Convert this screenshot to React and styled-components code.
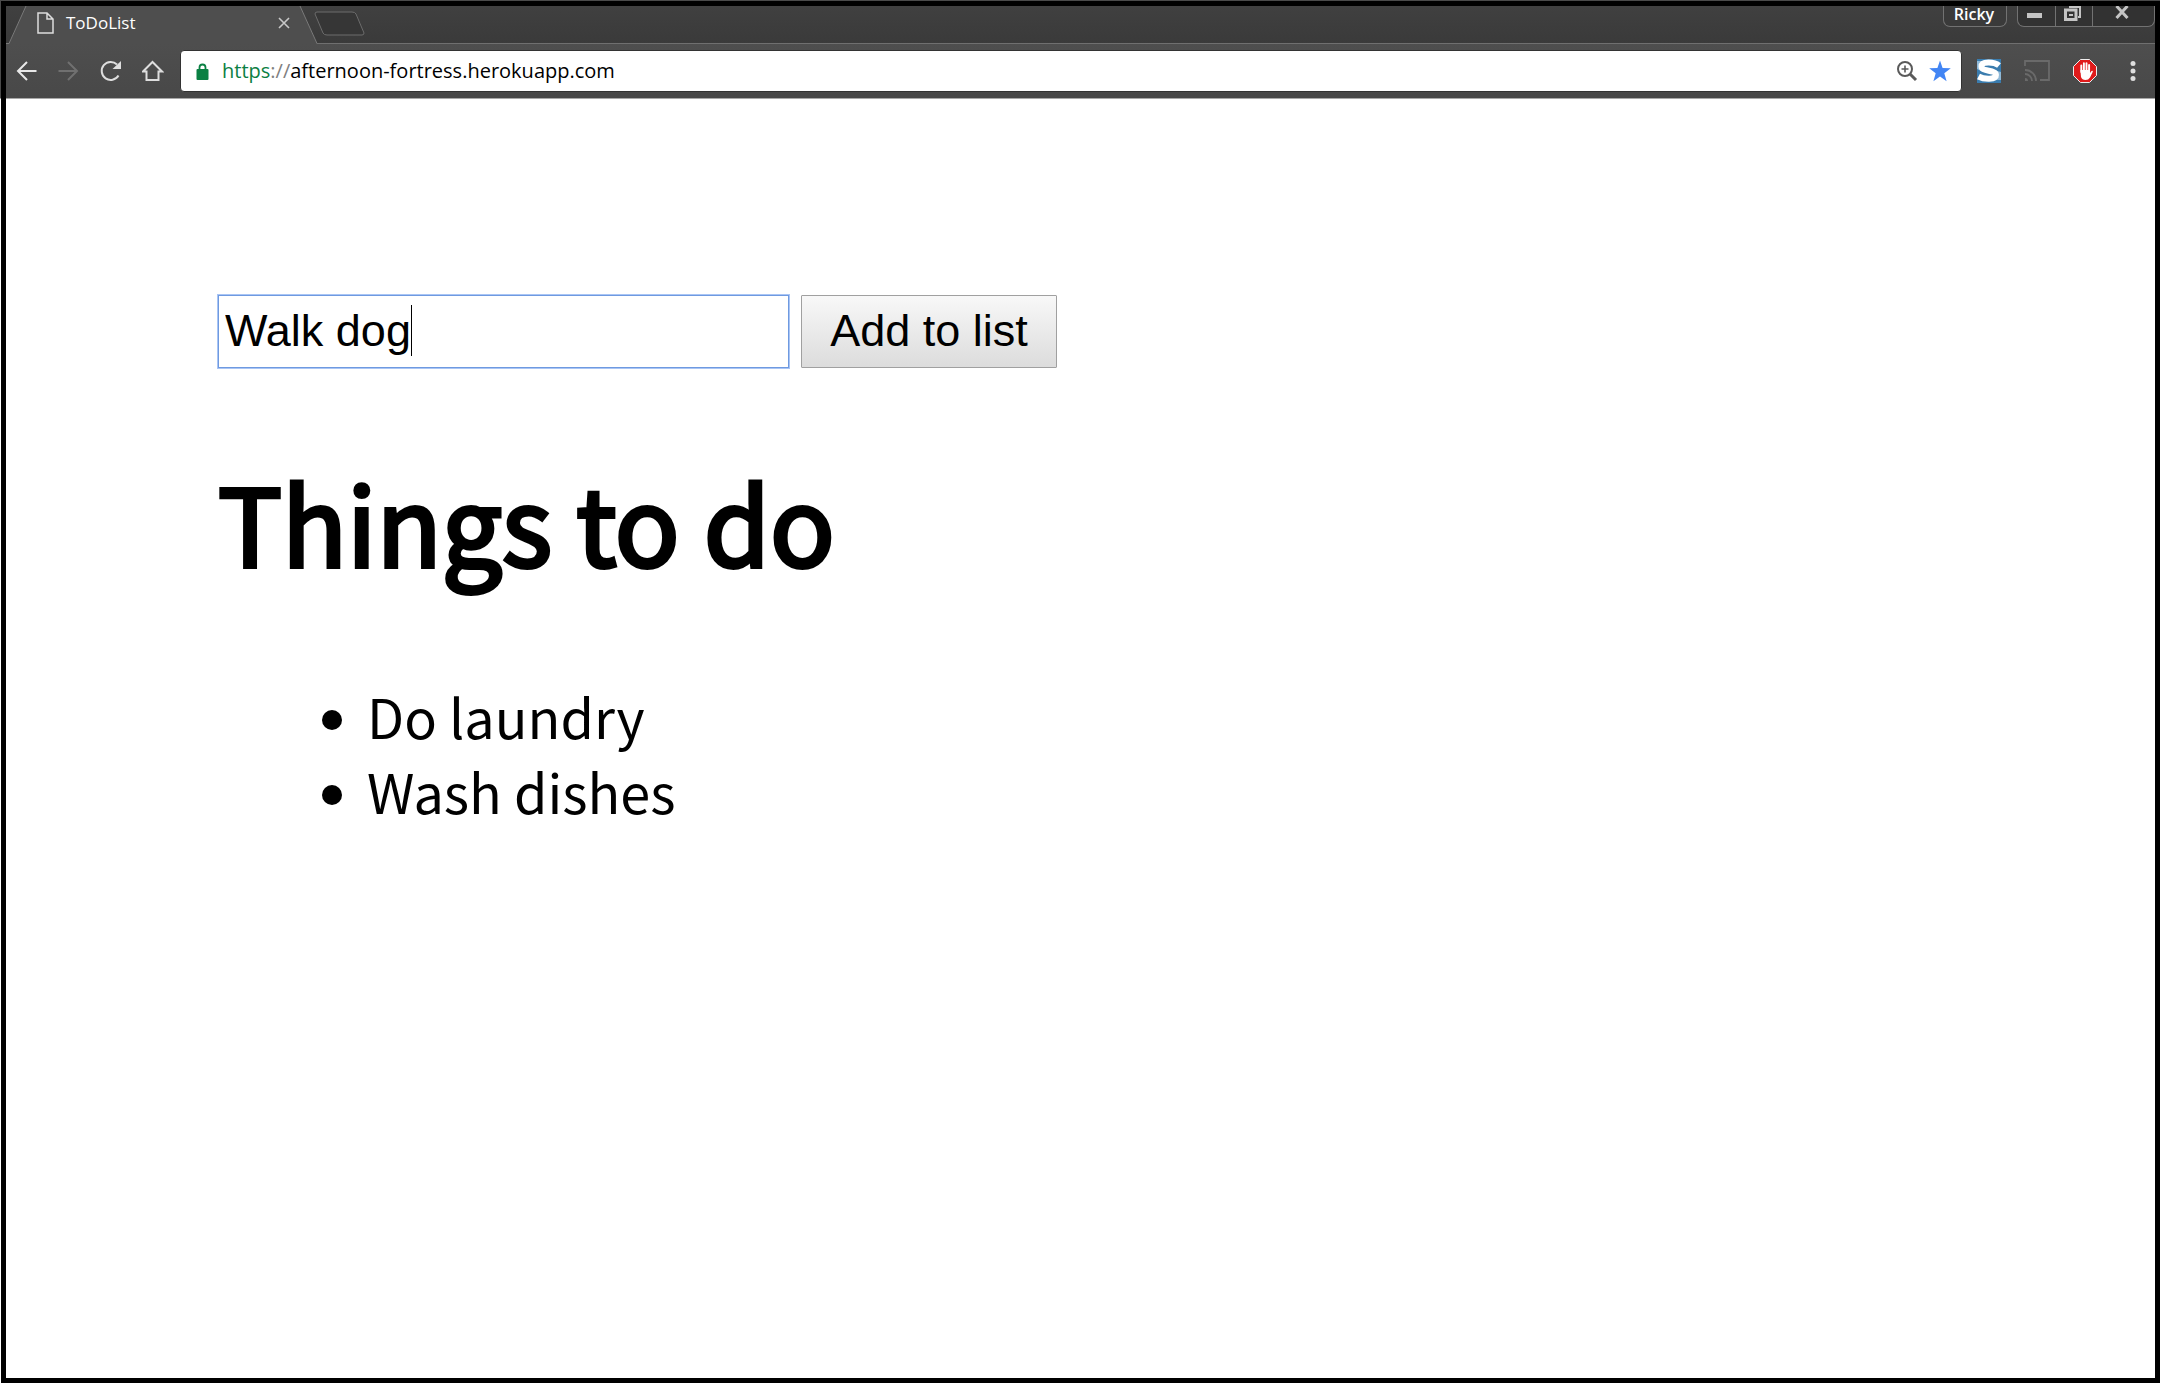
import React, { useState } from "react";
import styled, { createGlobalStyle } from "styled-components";

const ui = `"Open Sans", "Noto Sans", sans-serif`;

const GlobalStyle = createGlobalStyle`
  * { box-sizing: border-box; }
  html, body, #root { height: 100%; margin: 0; }
  body { background: #fff; color: #000; }
`;

const Frame = styled.div`
  min-height: 100%;
  display: flex;
  flex-direction: column;
  padding-top: 1px;
  padding-left: 1px;
  background: linear-gradient(#4a4a4a 98px, #fff 99px);
`;

const Window = styled.div`
  flex: 1;
  display: flex;
  flex-direction: column;
  border: 5px solid #000;
  background: #fff;
`;

const TabStrip = styled.header`
  display: flex;
  height: 38px;
  background: linear-gradient(#404040, #3a3a3a);
  box-shadow: inset 0 -1px 0 #6f6f6f;
`;

const Tab = styled.div`
  position: relative;
  display: flex;
  align-items: center;
  width: 306px;
  height: 38px;
  padding: 0 20px 4px 31px;
  gap: 12px;
  color: #fff;
  font: 17px/24px ${ui};
`;

const TabShape = styled.svg`
  position: absolute;
  top: 0;
  left: 0;
`;

const TabIcon = styled.svg`
  position: relative;
  flex: none;
`;

const TabTitle = styled.span`
  position: relative;
  flex: 1;
`;

const IconButton = styled.button`
  position: relative;
  display: flex;
  align-items: center;
  justify-content: center;
  flex: none;
  width: ${(p) => p.$width || 22}px;
  height: 24px;
  padding: 0;
  border: 0;
  background: none;
`;

const NewTabButton = styled(IconButton)`
  margin: 6px 0 0 2px;
`;

const Spacer = styled.div`
  flex: 1;
`;

const UserButton = styled.button`
  width: 64px;
  height: 21px;
  margin-right: 10px;
  padding: 0 2px 5px 0;
  border: 1px solid #727272;
  border-top: 0;
  border-radius: 0 0 7px 7px;
  background: #3a3a3a;
  color: #fff;
  font: 600 16px/16px ${ui};
`;

const WindowControls = styled.div`
  display: flex;
  height: 21px;
  border: 1px solid #727272;
  border-top: 0;
  border-radius: 0 0 7px 7px;
  background: #323232;
`;

const ControlButton = styled.button`
  display: flex;
  justify-content: center;
  width: ${(p) => p.$width}px;
  height: 20px;
  padding: 0 3px 0 0;
  border: 0;
  border-left: ${(p) => (p.$divided ? "1px solid #727272" : "0")};
  background: none;
`;

const Toolbar = styled.nav`
  display: flex;
  align-items: center;
  height: 55px;
  padding: 0 11px 0 10px;
  border-bottom: 1px solid #a8a8a8;
  background: linear-gradient(#4e4e4e, #484848);
`;

const NavButtons = styled.div`
  display: flex;
  gap: 20px;
  margin-right: 16px;
`;

const AddressBar = styled.div`
  flex: 1;
  display: flex;
  align-items: center;
  height: 42px;
  padding: 0 10px 0 15px;
  gap: 11px;
  border: 1px solid #333;
  border-radius: 4px;
  background: #fff;
`;

const Address = styled.a`
  flex: 1;
  padding-left: 2px;
  color: #000;
  font: 20px/28px ${ui};
  text-decoration: none;
`;

const Scheme = styled.span`
  color: ${(p) => (p.$secure ? "#0b8043" : "#808080")};
`;

const Extensions = styled.div`
  display: flex;
  align-items: center;
  gap: 23px;
  margin-left: 15px;
`;

const Page = styled.main`
  flex: 1;
  padding: 196px 212px 0;
  font-family: "Noto Sans CJK SC", sans-serif;
  font-size: 54px;
  line-height: 75px;
`;

const AddForm = styled.form`
  display: flex;
  gap: 12px;
`;

const Field = styled.div`
  position: relative;
  display: flex;
`;

const TaskInput = styled.input`
  width: 571px;
  height: 73px;
  padding: 0 6px 2px;
  border: 1px solid #6f9ae0;
  border-radius: 0;
  outline: 1px solid #a9c5f5;
  caret-color: transparent;
  font: 45px/52px "Liberation Sans", sans-serif;
`;

const Caret = styled.span`
  position: absolute;
  top: 10px;
  left: 193px;
  width: 1px;
  height: 51px;
  background: #000;
`;

const AddButton = styled.button`
  width: 256px;
  height: 73px;
  padding: 0 0 2px;
  border: 1px solid #a0a0a0;
  border-radius: 1px;
  background: linear-gradient(#f8f8f8, #dcdcdc);
  color: #000;
  font: 45px/52px "Liberation Sans", sans-serif;
`;

const Heading = styled.h1`
  margin: 78px 0 82px;
  font-size: 107px;
  font-weight: 400;
  line-height: 150px;
  -webkit-text-stroke: 4px #000;
`;

const TaskList = styled.ul`
  margin: 0;
  padding-left: 104px;
  list-style: none;
`;

const Task = styled.li`
  display: flex;
  align-items: center;
  gap: 25px;

  &::before {
    content: "";
    width: 20px;
    height: 20px;
    margin-top: 8px;
    border-radius: 50%;
    background: #000;
  }
`;

const initialTasks = ["Do laundry", "Wash dishes"];
const initialDraft = "Walk dog";

export default function App() {
  const [tasks, setTasks] = useState(initialTasks);
  const [draft, setDraft] = useState(initialDraft);

  const addTask = (event) => {
    event.preventDefault();
    if (!draft.trim()) return;
    setTasks([...tasks, draft.trim()]);
    setDraft("");
  };

  return (
    <Frame>
      <GlobalStyle />
      <Window>
        <TabStrip>
          <Tab>
            <TabShape width="312" height="38">
              <path d="M3 38 L20 0 H294 L311 38 Z" fill="#4e4e4e" />
              <path d="M0 37.5 H3 L20 0 M294 0 L311 37.5" fill="none" stroke="#7a7a7a" />
            </TabShape>
            <TabIcon width="17" height="22" fill="none" stroke="#ddd" strokeWidth="1.5">
              <path d="M1 1 H10 L16 7 V21 H1 Z M10 1 V7 H16" />
            </TabIcon>
            <TabTitle>ToDoList</TabTitle>
            <IconButton aria-label="Close tab" $width={16}>
              <svg width="12" height="12" stroke="#c8c8c8" strokeWidth="1.6">
                <path d="M1 1 L11 11 M11 1 L1 11" />
              </svg>
            </IconButton>
          </Tab>
          <NewTabButton aria-label="New tab" $width={52}>
            <svg width="52" height="26">
              <path d="M3 1 H38 Q41 1 42 3 L50 22 Q50 24 48 24 H13 Q10 24 9 22 L1 3 Q1 1 3 1 Z" fill="#363636" stroke="#6c6c6c" />
            </svg>
          </NewTabButton>
          <Spacer />
          <UserButton>Ricky</UserButton>
          <WindowControls>
            <ControlButton aria-label="Minimize" $width={37}>
              <svg width="16" height="20">
                <path d="M0 7 H15 V12 H0 Z" fill="#c4c4c4" />
              </svg>
            </ControlButton>
            <ControlButton aria-label="Restore" $width={37} $divided>
              <svg width="18" height="20" fill="none" stroke="#c4c4c4" strokeWidth="2">
                <path d="M1.5 4 H12 V13.5 H1.5 Z" strokeWidth="3" />
                <path d="M5 1 H16 V11 H14" />
                <path d="M5 9 H9" />
              </svg>
            </ControlButton>
            <ControlButton aria-label="Close" $width={62} $divided>
              <svg width="14" height="20" stroke="#c4c4c4" strokeWidth="3">
                <path d="M1.5 0 L12.5 12 M12.5 0 L1.5 12" />
              </svg>
            </ControlButton>
          </WindowControls>
        </TabStrip>
        <Toolbar>
          <NavButtons>
            <IconButton aria-label="Back">
              <svg width="22" height="22" fill="none" stroke="#e8e8e8" strokeWidth="2">
                <path d="M20.5 11 H2 M11 2 L2 11 L11 20" />
              </svg>
            </IconButton>
            <IconButton aria-label="Forward" disabled>
              <svg width="22" height="22" fill="none" stroke="#707070" strokeWidth="2">
                <path d="M0.5 11 H19 M10 2 L19 11 L10 20" />
              </svg>
            </IconButton>
            <IconButton aria-label="Reload">
              <svg width="22" height="22" fill="none" stroke="#dedede" strokeWidth="2">
                <path d="M18.5 15.5 A9 9 0 1 1 17 4.5" />
                <path d="M21 1 V9 H12.5 Z" fill="#dedede" stroke="none" />
              </svg>
            </IconButton>
            <IconButton aria-label="Home">
              <svg width="22" height="22" fill="none" stroke="#dedede" strokeWidth="2">
                <path d="M1 11.5 L10.5 2 L20 11.5 H16.5 V20 H4.5 V11.5 Z" />
              </svg>
            </IconButton>
          </NavButtons>
          <AddressBar>
            <svg width="13" height="17">
              <path d="M3.5 7 V4.5 A3 3 0 0 1 9.5 4.5 V7" fill="none" stroke="#0b8043" strokeWidth="1.8" />
              <rect x="0.5" y="6" width="12" height="11" rx="1" fill="#0b8043" />
            </svg>
            <Address href="#"><Scheme $secure>https</Scheme><Scheme>://</Scheme>afternoon-fortress.herokuapp.com</Address>
            <IconButton aria-label="Zoom">
              <svg width="22" height="22" fill="none" stroke="#5a5a5a" strokeWidth="2">
                <circle cx="9" cy="9" r="7" />
                <path d="M14 14 L20 20" strokeWidth="3" />
                <path d="M9 5.5 V12.5 M5.5 9 H12.5" strokeWidth="1.6" />
              </svg>
            </IconButton>
            <IconButton aria-label="Bookmark">
              <svg width="22" height="22">
                <path d="M11 0.5 L13.6 8 L21.8 8.2 L15.3 13.2 L17.6 21.2 L11 16.6 L4.4 21.2 L6.7 13.2 L0.2 8.2 L8.4 8 Z" fill="#4285f4" />
              </svg>
            </IconButton>
          </AddressBar>
          <Extensions>
            <IconButton aria-label="S extension" $width={24}>
              <svg width="24" height="24">
                <rect width="24" height="24" fill="#3a7cae" />
                <path d="M0 2 H5 L2 8 L6 13 L0 10 Z M24 21 H20 L22 15 L17 11 L24 13 Z" fill="#8fb9d8" />
                <path d="M22 6.5 C17 2.5 4.5 2 4.5 7.5 C4.5 13 19 10.5 19 16 C19 21 7 20.5 1.5 17.5" fill="none" stroke="#fff" strokeWidth="6" />
              </svg>
            </IconButton>
            <IconButton aria-label="Cast" $width={26}>
              <svg width="26" height="22" fill="none" stroke="#6a6a6a" strokeWidth="1.8">
                <path d="M1 6 V1 H25 V20 H16" />
                <path d="M1 10 A11 11 0 0 1 12 21 M1 14 A7 7 0 0 1 8 21" />
                <path d="M1 18 A3 3 0 0 1 4 21 H1 Z" fill="#6a6a6a" stroke="none" />
              </svg>
            </IconButton>
            <IconButton aria-label="Ad blocker" $width={24}>
              <svg width="24" height="24">
                <path d="M7.5 0.5 H16.5 L23.5 7.5 V16.5 L16.5 23.5 H7.5 L0.5 16.5 V7.5 Z" fill="#e01b1b" stroke="#eee" />
                <path d="M8.3 13 V6.5 M10.9 12 V4.2 M13.5 12 V4.2 M16.1 13 V6" stroke="#fff" strokeWidth="1.9" strokeLinecap="round" />
                <path d="M7.4 11 H17 V14 L18.6 12 Q20 11.4 19.8 12.8 L17 18.5 Q15.5 21 12.5 21 Q9 21 8 18 Z" fill="#fff" />
              </svg>
            </IconButton>
            <IconButton aria-label="Menu" $width={24}>
              <svg width="24" height="24" fill="#dedede">
                <circle cx="13" cy="4.5" r="2.5" />
                <circle cx="13" cy="12" r="2.5" />
                <circle cx="13" cy="19.5" r="2.5" />
              </svg>
            </IconButton>
          </Extensions>
        </Toolbar>
        <Page>
          <AddForm onSubmit={addTask}>
            <Field>
              <TaskInput aria-label="New task" value={draft} onChange={(e) => setDraft(e.target.value)} />
              {draft === initialDraft && <Caret />}
            </Field>
            <AddButton type="submit">Add to list</AddButton>
          </AddForm>
          <Heading>Things to do</Heading>
          <TaskList>
            {tasks.map((task) => (
              <Task key={task}>{task}</Task>
            ))}
          </TaskList>
        </Page>
      </Window>
    </Frame>
  );
}
